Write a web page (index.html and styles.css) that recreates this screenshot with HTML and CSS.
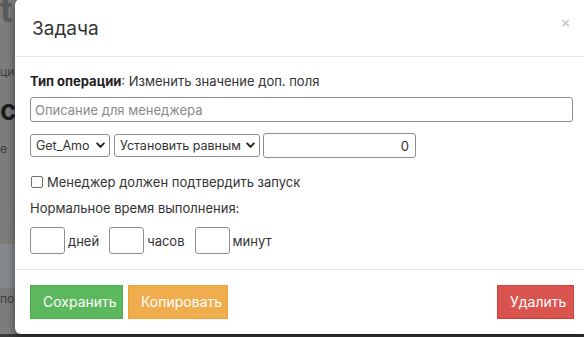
FILE: index.html
```html
<!DOCTYPE html>
<html lang="ru">
<head>
<meta charset="utf-8">
<title>Задача</title>
<link rel="stylesheet" href="styles.css">
</head>
<body>
<div class="page">
  <div class="page-col">
    <span class="pg-big">t</span>
    <span class="pg-small pg-s1">ции</span>
    <span class="pg-bold">с</span>
    <span class="pg-small pg-s2">е</span>
    <div class="pg-panel"></div>
    <span class="pg-small pg-s3">по</span>
  </div>
  <div class="pg-bar"></div>
</div>

<div class="modal">
  <div class="modal-header">
    <h4 class="modal-title">Задача</h4>
    <button class="close" type="button">×</button>
  </div>
  <div class="modal-body">
    <p class="op-line"><b>Тип операции</b>: Изменить значение доп. поля</p>
    <input class="field desc" type="text" placeholder="Описание для менеджера">
    <div class="sel-row">
      <span class="sel-wrap w1">
        <select class="sel"><option>Get_Amo</option></select>
        <svg class="chev" viewBox="0 0 10 8" width="9" height="7"><path d="M1.2 1.6 L5 5.6 L8.8 1.6" fill="none" stroke="#222" stroke-width="2.2" stroke-linecap="round" stroke-linejoin="round"/></svg>
      </span>
      <span class="sel-wrap w2">
        <select class="sel"><option>Установить равным</option></select>
        <svg class="chev" viewBox="0 0 10 8" width="9" height="7"><path d="M1.2 1.6 L5 5.6 L8.8 1.6" fill="none" stroke="#222" stroke-width="2.2" stroke-linecap="round" stroke-linejoin="round"/></svg>
      </span>
      <input class="field num" type="text" value="0">
    </div>
    <label class="check"><input type="checkbox" class="cb">Менеджер должен подтвердить запуск</label>
    <p class="norm">Нормальное время выполнения:</p>
    <div class="time">
      <input class="field tbox" type="text"><span class="unit">дней</span>
      <input class="field tbox" type="text"><span class="unit">часов</span>
      <input class="field tbox" type="text"><span class="unit">минут</span>
    </div>
  </div>
  <div class="modal-footer">
    <button class="btn btn-success" type="button">Сохранить</button>
    <button class="btn btn-warning" type="button">Копировать</button>
    <button class="btn btn-danger" type="button">Удалить</button>
  </div>
</div>
</body>
</html>
```
FILE: styles.css
```css
* { box-sizing: border-box; }
html, body { margin: 0; padding: 0; }
body {
  width: 584px;
  height: 337px;
  overflow: hidden;
  background: #7d7d7d;
  font-family: Inter, "Noto Sans", sans-serif;
  color: #333;
  position: relative;
}
.page { height: 337px; display: flex; flex-direction: column; }
.page-col {
  flex: 1;
  display: flex;
  flex-direction: column;
  color: #4a4a4a;
}
.pg-big { font-size: 34px; font-weight: 700; line-height: 28px; margin-top: -4px; color: #5a5a5a; }
.pg-small { font-size: 12px; color: #3d3d3d; }
.pg-s1 { margin-top: 40px; }
.pg-bold { font-size: 28px; font-weight: 700; color: #1e1e1e; margin-top: 16px; line-height: 30px; }
.pg-s2 { margin-top: 16px; }
.pg-panel { height: 44px; margin-top: 88px; background: #868a8f; }
.pg-s3 { line-height: 22px; }
.pg-bar { height: 3px; background: #3a3a3a; }

.modal {
  position: absolute;
  left: 15px;
  top: -1px;
  width: 574px;
  background: #fff;
  border-radius: 6px;
  box-shadow: 0 3px 9px rgba(0,0,0,.5);
}
.modal-header {
  display: flex;
  align-items: flex-start;
  justify-content: space-between;
  padding: 15px 19px 14px 17px;
  border-bottom: 1px solid #e5e5e5;
}
.modal-title {
  margin: 2px 0 0;
  font-size: 19px;
  font-weight: 400;
  line-height: 26px;
  color: #333;
}
.close {
  border: 0;
  background: none;
  padding: 0;
  font-family: "Liberation Sans", sans-serif;
  font-size: 15px;
  font-weight: 700;
  line-height: 18px;
  color: #000;
  opacity: .2;
}
.modal-body {
  padding: 15px;
  font-size: 13px;
}
.op-line { margin: 0; line-height: 18px; }
.op-line b { font-weight: 700; color: #222; }
.field {
  font-family: inherit;
  font-size: 13px;
  color: #333;
  border: 1px solid #8e8e8e;
  border-radius: 3px;
  background: #fff;
  outline: none;
}
.desc {
  display: block;
  width: 543px;
  height: 25px;
  margin-top: 7px;
  padding: 0 4px;
}
.desc::placeholder { color: #8a8a8a; }
.sel-row {
  display: flex;
  align-items: center;
  gap: 4px;
  margin-top: 11px;
}
.sel-wrap { position: relative; display: block; height: 23px; }
.w1 { width: 80px; }
.w2 { width: 146px; }
.sel {
  appearance: none;
  -webkit-appearance: none;
  width: 100%;
  height: 23px;
  border: 1px solid #8e8e8e;
  border-radius: 3px;
  background: #fff;
  font-family: inherit;
  font-size: 12.5px;
  color: #333;
  padding: 0 17px 0 5px;
  overflow: hidden;
  white-space: nowrap;
}
.chev { position: absolute; right: 5px; top: 8px; }
.num {
  width: 153px;
  height: 25px;
  text-align: right;
  padding: 0 6px;
  margin-left: -1px;
}
.check {
  display: flex;
  align-items: center;
  gap: 4px;
  margin-top: 15px;
  line-height: 18px;
}
.cb {
  appearance: none;
  -webkit-appearance: none;
  width: 12px;
  height: 12px;
  margin: 0 0 0 1px;
  border: 1px solid #6f6f6f;
  border-radius: 2px;
  background: #fff;
}
.norm { margin: 8px 0 0; line-height: 18px; }
.time {
  display: flex;
  align-items: center;
  margin-top: 10px;
}
.tbox { width: 35px; height: 27px; }
.unit { margin: 0 10px 0 3px; }
.modal-footer {
  display: flex;
  gap: 5px;
  padding: 15px;
  border-top: 1px solid #e5e5e5;
}
.btn {
  height: 34px;
  padding: 6px 12px;
  border: 1px solid transparent;
  border-radius: 0;
  font-family: inherit;
  font-size: 14px;
  line-height: 20px;
  color: #fff;
}
.btn-success { width: 93px; background: #5cb85c; border-color: #4cae4c; }
.btn-warning { width: 100px; background: #f0ad4e; border-color: #eea236; }
.btn-danger { width: 77px; margin-left: auto; background: #d9534f; border-color: #d43f3a; }
```
